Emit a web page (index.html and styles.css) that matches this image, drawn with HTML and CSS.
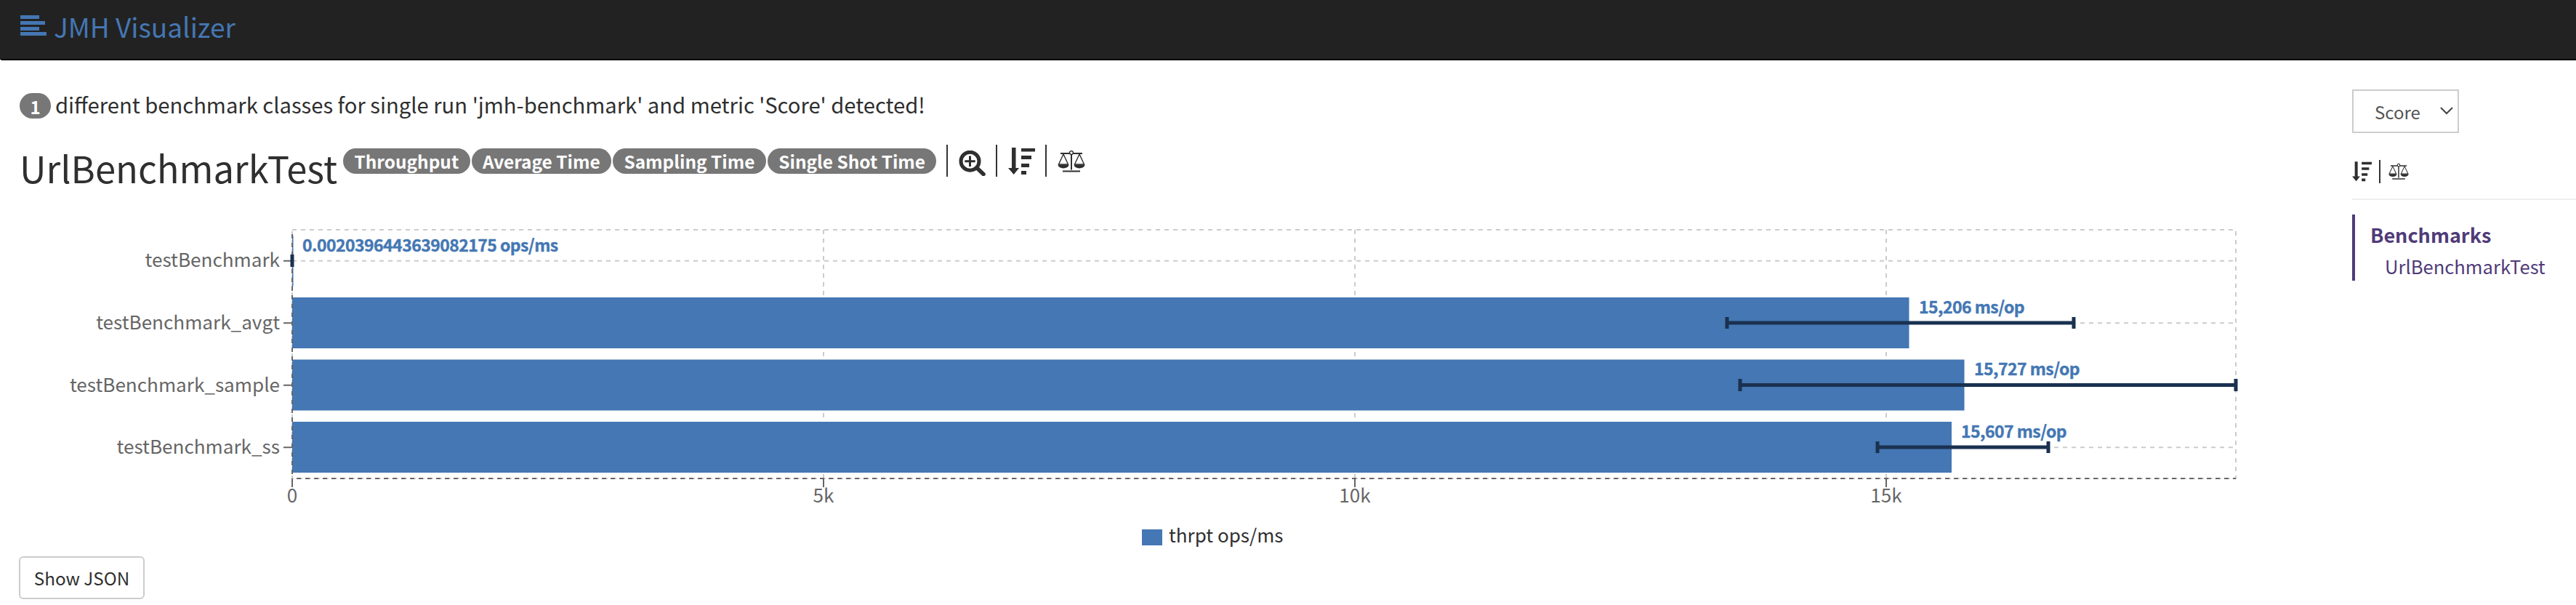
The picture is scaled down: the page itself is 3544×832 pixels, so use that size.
FILE: index.html
```html
<!DOCTYPE html>
<html lang="en">
<head>
<meta charset="UTF-8">
<meta name="viewport" content="width=device-width, initial-scale=1.0">
<title>JMH Visualizer</title>
<link rel="stylesheet" href="styles.css">
</head>
<body>
    <svg class="icon-defs" width="0" height="0">
        <symbol id="icon-sort" viewBox="0 0 37 38">
            <path d="M5 0h5.500v28H15L7.700 37 0 28h5z"/>
            <path d="M18 1h19v4.500H18zM18 11h14v5H18zM18 22h11v5H18zM18 32h7v5h-7z"/>
        </symbol>
        <symbol id="icon-scale" viewBox="0 0 38 30">
            <path d="M4 4h30M19 4v22.500M7 28.500h24" fill="none" stroke="currentColor" stroke-width="2"/>
            <circle cx="19" cy="3" r="2.400" fill="#fff" stroke="currentColor" stroke-width="1.400"/>
            <path d="M8 5 1.500 19h13zM30 5l-6.500 14h13z" fill="none" stroke="currentColor" stroke-width="1.400"/>
            <path d="M.5 19.500h15a7.500 5 0 0 1-15 0zM22.500 19.500h15a7.500 5 0 0 1-15 0z"/>
        </symbol>
    </svg>

    <header class="navbar">
        <svg class="navbar-icon" viewBox="0 0 36 28">
            <path d="M0 0h26v5H0zM0 8h34v5H0zM0 16h26v5H0zM0 23h36v5H0z"/>
        </svg>
        <span class="navbar-title">JMH Visualizer</span>
    </header>

    <div class="page">
        <main class="content">
            <p class="notice"><span class="count-badge">1</span><span class="notice-text">different benchmark classes for single run 'jmh-benchmark' and metric 'Score' detected!</span></p>

            <div class="title-row">
                <h1>UrlBenchmarkTest</h1>
                <div class="modes">
                    <span class="mode">Throughput</span>
                    <span class="mode">Average Time</span>
                    <span class="mode">Sampling Time</span>
                    <span class="mode">Single Shot Time</span>
                </div>
                <div class="tools">
                    <svg class="tool tool-zoom" viewBox="0 0 37 35">
                        <circle cx="15.500" cy="14.700" r="12.500" fill="none" stroke="currentColor" stroke-width="5"/>
                        <path d="M15.500 7.500v14.400M8.300 14.700h14.400" fill="none" stroke="currentColor" stroke-width="3"/>
                        <path d="M25 24l9 8.500" fill="none" stroke="currentColor" stroke-width="5.500" stroke-linecap="round"/>
                    </svg>
                    <svg class="tool tool-sort"><use href="#icon-sort"/></svg>
                    <svg class="tool tool-scale"><use href="#icon-scale"/></svg>
                </div>
            </div>

            <svg class="chart" viewBox="0 300 3140 460">
                <g class="grid">
                    <path d="M402 317H3076V659H402z"/>
                    <path d="M1133 317V659M1864 317V659M2595 317V659"/>
                    <path d="M402 359.750H3076M402 445.250H3076M402 530.750H3076M402 616.250H3076"/>
                </g>

                <g class="bars">
                    <rect x="402" y="325" width="1.500" height="70"/>
                    <rect x="402" y="410" width="2224.500" height="70"/>
                    <rect x="402" y="495.500" width="2300.500" height="70"/>
                    <rect x="402" y="581" width="2283" height="70"/>
                </g>

                <g class="axis">
                    <path d="M402 317V659M402 659H3076"/>
                </g>
                <g class="ticks">
                    <path d="M390 359.750H402M390 445.250H402M390 530.750H402M390 616.250H402"/>
                    <path d="M402 659V671M1133 659V671M1864 659V671M2595 659V671"/>
                </g>

                <g class="errors">
                    <path d="M402 351V368"/>
                    <path d="M2376 445H2853M2376 437V453M2853 437V453"/>
                    <path d="M2394 530.500H3076M2394 522V539M3076 522V539"/>
                    <path d="M2583 616H2818M2583 608V624M2818 608V624"/>
                </g>

                <g class="y-labels">
                    <text x="385" y="368">testBenchmark</text>
                    <text x="385" y="454">testBenchmark_avgt</text>
                    <text x="385" y="540">testBenchmark_sample</text>
                    <text x="385" y="625">testBenchmark_ss</text>
                </g>
                <g class="x-labels">
                    <text x="402" y="692">0</text>
                    <text x="1133" y="692">5k</text>
                    <text x="1864" y="692">10k</text>
                    <text x="2595" y="692">15k</text>
                </g>
                <g class="values">
                    <text x="416" y="347">0.0020396443639082175 ops/ms</text>
                    <text x="2640" y="432">15,206 ms/op</text>
                    <text x="2716" y="517">15,727 ms/op</text>
                    <text x="2698" y="603">15,607 ms/op</text>
                </g>

                <rect class="legend-box" x="1571" y="729" width="28" height="22"/>
                <text class="legend-text" x="1608" y="747">thrpt ops/ms</text>
            </svg>

            <button class="json-button">Show JSON</button>
        </main>

        <aside class="sidebar">
            <div class="select-wrap">
                <select class="metric-select">
                    <option>Score</option>
                </select>
                <svg class="select-arrow" viewBox="0 0 18 11">
                    <path d="M1 1l8 8 8-8" fill="none" stroke="currentColor" stroke-width="2"/>
                </svg>
            </div>
            <div class="side-tools">
                <svg class="side-sort"><use href="#icon-sort"/></svg>
                <svg class="side-scale"><use href="#icon-scale"/></svg>
            </div>
            <nav class="side-nav">
                <div class="side-nav-title">Benchmarks</div>
                <div class="side-nav-item">UrlBenchmarkTest</div>
            </nav>
        </aside>
    </div>
</body>
</html>
```

FILE: styles.css
```css
body {
    margin: 0;
    height: 832px;
    overflow: hidden;
    background-color: #fff;
    color: #2f2f2f;
    font-family: "Noto Sans CJK SC", "Noto Sans", sans-serif;
}

.icon-defs {
    position: absolute;
}

.navbar {
    display: flex;
    align-items: flex-start;
    gap: 10px;
    box-sizing: border-box;
    height: 83px;
    padding: 21px 0 0 28px;
    background-color: #222;
    border-bottom: 2px solid #080808;
    border-bottom-left-radius: 3px;
    color: #4477b3;
}

.navbar-icon {
    width: 36px;
    height: 28px;
    fill: currentColor;
}

.navbar-title {
    font-size: 37px;
    line-height: 30px;
}

.page {
    display: flex;
}

.content {
    flex: none;
    width: 3236px;
}

.notice {
    display: flex;
    align-items: center;
    gap: 6px;
    margin: 45px 0 0 27px;
    height: 35px;
    font-size: 29.2px;
    line-height: 35px;
}

.notice-text {
    margin-bottom: 4px;
}

.count-badge {
    flex: none;
    width: 43px;
    height: 35px;
    border-radius: 18px;
    background-color: #777;
    color: #fff;
    font-size: 24px;
    font-weight: 700;
    line-height: 37px;
    text-align: center;
}

.title-row {
    display: flex;
    align-items: flex-start;
    height: 44px;
    margin: 36px 0 0 27px;
}

h1 {
    margin: 0 8px 0 0;
    font-size: 50.7px;
    font-weight: 400;
    line-height: 62px;
    white-space: nowrap;
}

.modes {
    display: flex;
    gap: 2px;
    margin-top: 5px;
}

.mode {
    height: 35px;
    padding: 0 15.400px;
    border-radius: 18px;
    background-color: #777;
    color: #fff;
    font-size: 24.4px;
    font-weight: 700;
    line-height: 35px;
    white-space: nowrap;
}

.tools {
    display: flex;
    align-items: stretch;
    margin-left: 14px;
}

.tool {
    display: block;
    box-sizing: content-box;
    border-left: 2px solid #333;
    color: #2f2f2f;
    fill: currentColor;
}

.tool-zoom {
    width: 37px;
    height: 35px;
    padding: 8px 14px 1px 15px;
}

.tool-sort {
    width: 37px;
    height: 38px;
    padding: 4px 14px 2px 15px;
}

.tool-scale {
    width: 38px;
    height: 30px;
    padding: 8px 0 6px 15px;
}

.chart {
    display: block;
    width: 3140px;
    height: 460px;
    margin-top: 56px;
    font-family: "Noto Sans CJK SC", "Noto Sans", sans-serif;
}

.grid path {
    fill: none;
    stroke: #ccc;
    stroke-width: 2;
    stroke-dasharray: 6 6;
}

.bars rect,
.legend-box {
    fill: #4477b3;
}

.axis path {
    fill: none;
    stroke: #666;
    stroke-width: 2;
    stroke-dasharray: 6 6;
    stroke-dashoffset: 6;
}

.ticks path {
    fill: none;
    stroke: #666;
    stroke-width: 2;
}

.errors path {
    fill: none;
    stroke: #1a3150;
    stroke-width: 5;
}

.y-labels text,
.x-labels text {
    fill: #666;
    font-size: 26.1px;
}

.y-labels text {
    text-anchor: end;
}

.x-labels text {
    text-anchor: middle;
}

.values text {
    fill: #4477b3;
    stroke: #4477b3;
    stroke-width: 0.4;
    font-size: 23px;
    font-weight: 700;
    letter-spacing: -0.55px;
}

.legend-text {
    fill: #2f2f2f;
    font-size: 26px;
}

.json-button {
    display: block;
    box-sizing: border-box;
    width: 173px;
    height: 59px;
    margin: 6px 0 0 26px;
    padding: 0;
    border: 2px solid #ccc;
    border-radius: 6px;
    background-color: #fff;
    color: #2f2f2f;
    font-family: inherit;
    font-size: 24.2px;
}

.sidebar {
    flex: 1;
    min-width: 0;
}

.select-wrap {
    position: relative;
    width: 147px;
    height: 60px;
    margin-top: 40px;
}

.metric-select {
    appearance: none;
    box-sizing: border-box;
    width: 100%;
    height: 100%;
    padding: 0 0 0 29px;
    border: 2px solid #ccc;
    border-radius: 0;
    background-color: #fff;
    color: #555;
    font-family: inherit;
    font-size: 24px;
}

.select-arrow {
    position: absolute;
    top: 24px;
    right: 8px;
    width: 18px;
    height: 11px;
    color: #444;
    pointer-events: none;
}

.side-tools {
    display: flex;
    align-items: center;
    height: 32px;
    margin-top: 37px;
    padding-bottom: 21px;
    border-bottom: 2px solid #eee;
    color: #2f2f2f;
}

.side-sort {
    width: 27px;
    height: 28px;
    margin-right: 10px;
    fill: currentColor;
}

.side-scale {
    width: 28px;
    height: 32px;
    padding-left: 11px;
    border-left: 2px solid #333;
    fill: currentColor;
}

.side-nav {
    box-sizing: border-box;
    height: 91px;
    margin-top: 20px;
    padding: 10px 0 0 21px;
    border-left: 4px solid #4f3b78;
    color: #4f3b78;
}

.side-nav-title {
    font-size: 27px;
    font-weight: 700;
    line-height: 36px;
}

.side-nav-item {
    margin: 10px 0 0 20px;
    font-size: 25.6px;
    line-height: 30px;
}
```
